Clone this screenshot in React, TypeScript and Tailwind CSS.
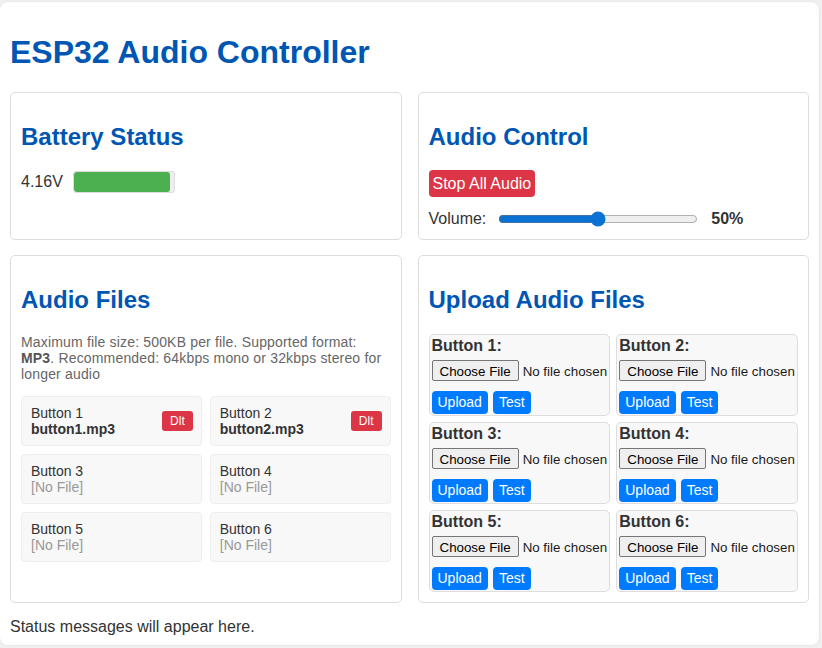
import { useState } from "react";

const font = { fontFamily: '"Liberation Sans", Arial, sans-serif' };

const files = [
  { label: "Button 1", name: "button1.mp3" },
  { label: "Button 2", name: "button2.mp3" },
  { label: "Button 3", name: "" },
  { label: "Button 4", name: "" },
  { label: "Button 5", name: "" },
  { label: "Button 6", name: "" },
];

const Card = ({ title, children }: { title: string; children: React.ReactNode }) => (
  <div className="bg-white border border-[#ddd] rounded-[5px] p-[10px]">
    <h2 className="text-[24px] leading-[27.6px] font-bold text-[#0056b3] my-[19.92px]">{title}</h2>
    {children}
  </div>
);

export default function App() {
  const [volume, setVolume] = useState(50);

  return (
    <div className="min-h-screen bg-[#f0f0f0] pt-[2px] text-[#333]" style={font}>
      <div className="w-[819px] bg-white rounded-[8px] shadow-[0_0_3px_rgba(0,0,0,0.08)] px-[10px] pt-[10px] pb-[9px]">
        <h1 className="text-[32px] leading-[38px] font-bold text-[#0056b3] my-[21px]">ESP32 Audio Controller</h1>

        <div className="grid grid-cols-2 gap-x-[16px] gap-y-[15px]">
          {/* Battery */}
          <Card title="Battery Status">
            <div className="flex items-center gap-[10px]">
              <span className="text-[16px]">4.16V</span>
              <div className="w-[102px] h-[22px] border border-[#ddd] bg-[#eee] rounded-[3px] overflow-hidden">
                <div className="h-full bg-[#4caf50] rounded-[3px]" style={{ width: "96%" }} />
              </div>
            </div>
          </Card>

          {/* Audio control */}
          <Card title="Audio Control">
            <button className="h-[27px] px-[4px] bg-[#dc3545] text-white text-[16px] rounded-[4px]">
              Stop All Audio
            </button>
            <div className="flex items-center mt-[11px] h-[21px]">
              <span className="text-[16px] mr-[12px]">Volume:</span>
              <input
                type="range"
                min={0}
                max={100}
                value={volume}
                onChange={(e) => setVolume(Number(e.target.value))}
                className="w-[200px] accent-[#0a72d2]"
              />
              <span className="ml-[13px] text-[16px] font-bold">{volume}%</span>
            </div>
          </Card>

          {/* Audio files */}
          <Card title="Audio Files">
            <p className="text-[14px] leading-[16px] tracking-[0.17px] text-[#666] mb-[14px]">
              Maximum file size: 500KB per file. Supported format: <b className="text-[#555]">MP3</b>. Recommended: 64kbps mono or 32kbps stereo for longer audio
            </p>
            <div className="grid grid-cols-2 gap-[8px]">
              {files.map((f) => (
                <div
                  key={f.label}
                  className="flex items-center justify-between bg-[#f8f8f8] border border-[#eee] rounded-[4px] pl-[9px] pr-[8px] py-[8px] text-[14px] leading-[16px]"
                >
                  <div>
                    <div>{f.label}</div>
                    {f.name ? <div className="font-bold">{f.name}</div> : <div className="text-[#999]">[No File]</div>}
                  </div>
                  {f.name && (
                    <button className="bg-[#dc3545] text-white text-[12px] leading-[14px] px-[8px] py-[3px] rounded-[3px]">Dlt</button>
                  )}
                </div>
              ))}
            </div>
          </Card>

          {/* Upload */}
          <Card title="Upload Audio Files">
            <div className="grid grid-cols-2 gap-[6px]">
              {[1, 2, 3, 4, 5, 6].map((n) => (
                <div key={n} className="bg-[#f8f8f8] border border-[#ddd] rounded-[5px] px-[2px] pt-[2px] pb-[1px]">
                  <div className="text-[16px] leading-[18px] font-bold">Button {n}:</div>
                  <input
                    type="file"
                    accept=".mp3"
                    className="block h-[21px] mt-[5px] text-[13.33px] leading-[21px] text-[#1a1a1a] file:h-[21px] file:mr-[4px] file:px-[7px] file:border file:border-[#767676] file:rounded-[2px] file:bg-[#efefef] file:text-black"
                  />
                  <div className="flex gap-[5px] mt-[10px]">
                    <button className="h-[23px] px-[6px] bg-[#007bff] text-white text-[14px] rounded-[4px]">Upload</button>
                    <button className="h-[23px] px-[6px] bg-[#007bff] text-white text-[14px] rounded-[4px]">Test</button>
                  </div>
                </div>
              ))}
            </div>
          </Card>
        </div>

        <div className="mt-[15px] text-[16px] leading-[18px]">Status messages will appear here.</div>
      </div>
    </div>
  );
}
